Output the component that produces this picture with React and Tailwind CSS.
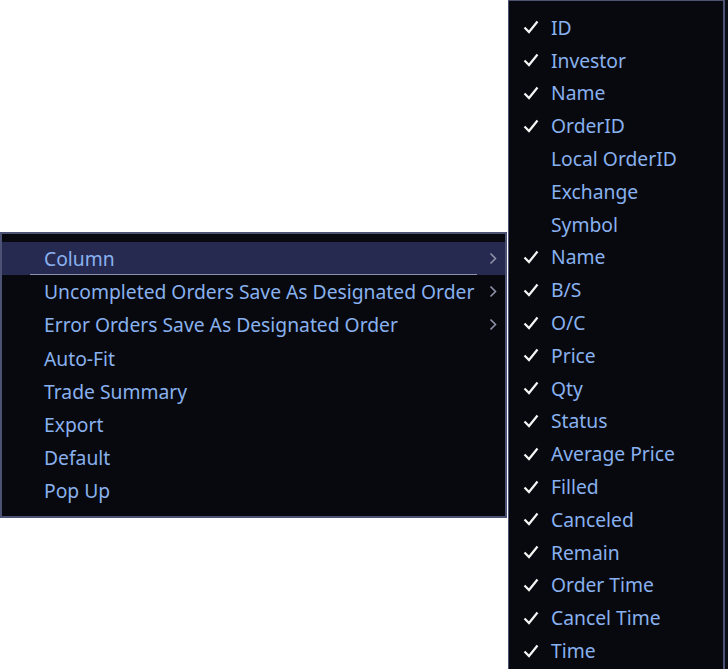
const font = { fontFamily: '"Noto Sans", "Liberation Sans", sans-serif' };

const mainItems = [
  { label: "Column", sub: true, active: true },
  { label: "Uncompleted Orders Save As Designated Order", sub: true },
  { label: "Error Orders Save As Designated Order", sub: true },
  { label: "Auto-Fit" },
  { label: "Trade Summary" },
  { label: "Export" },
  { label: "Default" },
  { label: "Pop Up" },
];

const columns = [
  ["ID", true],
  ["Investor", true],
  ["Name", true],
  ["OrderID", true],
  ["Local OrderID", false],
  ["Exchange", false],
  ["Symbol", false],
  ["Name", true],
  ["B/S", true],
  ["O/C", true],
  ["Price", true],
  ["Qty", true],
  ["Status", true],
  ["Average Price", true],
  ["Filled", true],
  ["Canceled", true],
  ["Remain", true],
  ["Order Time", true],
  ["Cancel Time", true],
  ["Time", true],
];

function Check() {
  return (
    <svg width="16" height="14" viewBox="0 0 16 14" className="shrink-0">
      <path d="M1.5 7.5 L6 12 L14.5 1.5" fill="none" stroke="#f5f5f5" strokeWidth="2.2" />
    </svg>
  );
}

function Chevron() {
  return (
    <svg width="8" height="13" viewBox="0 0 8 13">
      <path d="M1.5 1.5 L6.5 6.5 L1.5 11.5" fill="none" stroke="#8d92a6" strokeWidth="1.6" />
    </svg>
  );
}

export default function App() {
  return (
    <div className="relative w-[728px] h-[669px] bg-white overflow-hidden" style={font}>
      {/* underlying window edge on the right */}
      <div className="absolute left-[724px] top-0 w-[4px] h-full bg-[#0b0d14] border-l border-[#4b5273]" />

      {/* main context menu */}
      <div className="absolute left-0 top-[232px] w-[507px] h-[286px] bg-[#07090e] border-2 border-[#4b5273] pt-[8px]">
        {mainItems.map((it, i) => (
          <div
            key={i}
            className={`relative h-[33.2px] flex items-center pl-[42px] pr-[8px] text-[19.3px] text-[#89b1ef] ${
              it.active ? "bg-[#262a50]" : ""
            }`}
          >
            <span className="flex-1 leading-none whitespace-nowrap">{it.label}</span>
            {it.sub && <Chevron />}
            {it.active && <div className="absolute left-[28px] right-[28px] bottom-0 h-[1px] bg-[#8a90b0]" />}
          </div>
        ))}
      </div>

      {/* column submenu */}
      <div className="absolute left-[508px] top-0 w-[217px] h-[680px] bg-[#07090e] border-l border-t border-r-2 border-[#4b5273] pt-[10px]">
        {columns.map(([label, on], i) => (
          <div key={i} className="h-[32.8px] flex items-center pl-[14px] text-[19.3px] text-[#89b1ef]">
            <div className="w-[28px] flex items-center">{on && <Check />}</div>
            <span className="leading-none whitespace-nowrap">{label}</span>
          </div>
        ))}
      </div>
    </div>
  );
}
